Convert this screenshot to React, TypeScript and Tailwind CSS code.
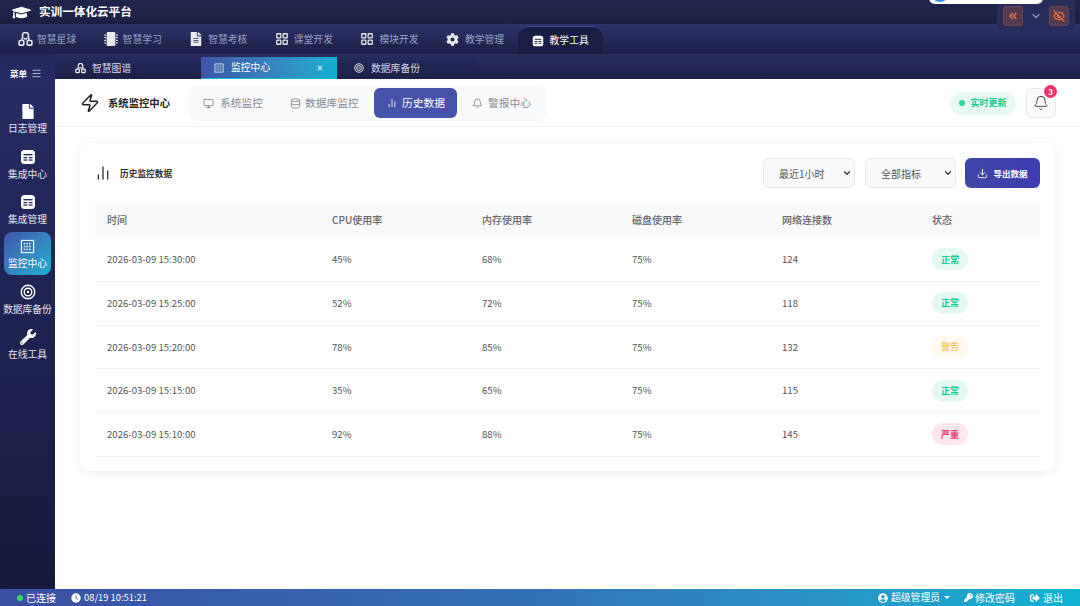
import React from "react";
import { Download, ChartNoAxesColumn, Zap, Monitor, Database, Bell, Menu, ChevronDown, ChevronsLeft, EyeOff, LayoutGrid, X } from "lucide-react";
import { FaCog, FaFile, FaFileAlt, FaGraduationCap, FaKey, FaMicrochip, FaSignOutAlt, FaUserCircle, FaWrench } from "react-icons/fa";

const font = { fontFamily: '"Noto Sans CJK SC", Inter, sans-serif' };

function ToolIcon({ className = "" }: { className?: string }) {
  return (
    <svg viewBox="0 0 16 16" className={className}>
      <rect x="1" y="1" width="14" height="14" rx="3.5" fill="currentColor" />
      <rect x="3.5" y="5" width="9" height="1.4" fill="#26305f" />
      <rect x="3.5" y="8" width="3.8" height="1.3" fill="#26305f" />
      <rect x="8.7" y="8" width="3.8" height="1.3" fill="#26305f" />
      <rect x="3.5" y="10.4" width="3.8" height="1.3" fill="#26305f" />
      <rect x="8.7" y="10.4" width="3.8" height="1.3" fill="#26305f" />
    </svg>
  );
}

function GridBox({ className = "" }: { className?: string }) {
  return (
    <svg viewBox="0 0 16 16" className={className} fill="none" stroke="currentColor">
      <rect x="1.5" y="1.5" width="13" height="13" strokeWidth="1.2" />
      <path d="M4 5h8M4 8h8M4 11h8" strokeWidth="1.4" strokeDasharray="1.6 1.2" />
    </svg>
  );
}

function NetIcon({ className = "" }: { className?: string }) {
  return (
    <svg viewBox="0 0 16 16" className={className} fill="none" stroke="currentColor" strokeWidth="1.7">
      <path d="M5.2 5.2A3.2 3.2 0 1 1 10.8 5.2L12 8.2" />
      <path d="M5.2 5.2L4 8.2" />
      <rect x="1.2" y="9" width="5" height="5" rx="1" />
      <rect x="9.8" y="9" width="5" height="5" rx="1" />
      <path d="M6 7.2h4" />
    </svg>
  );
}

function Bullseye({ className = "" }: { className?: string }) {
  return (
    <svg viewBox="0 0 16 16" className={className} fill="none" stroke="currentColor" strokeWidth="1.4">
      <circle cx="8" cy="8" r="6.8" />
      <circle cx="8" cy="8" r="3.8" />
      <circle cx="8" cy="8" r="1.2" fill="currentColor" stroke="none" />
    </svg>
  );
}

function SolidClock({ className = "" }: { className?: string }) {
  return (
    <svg viewBox="0 0 16 16" className={className}>
      <circle cx="8" cy="8" r="7.5" fill="currentColor" />
      <path d="M8 3.8V8.4L11 10.2" fill="none" stroke="#3569b3" strokeWidth="1.6" />
    </svg>
  );
}

const navs: [string, React.ReactNode][] = [
  ["智慧星球", <NetIcon key="a" className="w-[15px] h-[15px]" />],
  ["智慧学习", <FaMicrochip key="b" className="w-[14px] h-[14px]" />],
  ["智慧考核", <FaFileAlt key="c" className="w-[14px] h-[14px]" />],
  ["课堂开发", <LayoutGrid key="d" className="w-[14px] h-[14px]" strokeWidth={2.2} />],
  ["模块开发", <LayoutGrid key="e" className="w-[14px] h-[14px]" strokeWidth={2.2} />],
  ["教学管理", <FaCog key="f" className="w-[13px] h-[13px]" />],
];

const side: [string, React.ReactNode, boolean?][] = [
  ["日志管理", <FaFile key="1" className="w-[14px] h-[15px]" />],
  ["集成中心", <ToolIcon key="2" className="w-[16px] h-[16px]" />],
  ["集成管理", <ToolIcon key="3" className="w-[16px] h-[16px]" />],
  ["监控中心", <GridBox key="4" className="w-[15px] h-[15px]" />, true],
  ["数据库备份", <Bullseye key="5" className="w-[16px] h-[16px]" />],
  ["在线工具", <FaWrench key="6" className="w-[16px] h-[16px]" />],
];

const rows: [string, string, string, string, string, "ok" | "warn" | "bad"][] = [
  ["2026-03-09 15:30:00", "45%", "68%", "75%", "124", "ok"],
  ["2026-03-09 15:25:00", "52%", "72%", "75%", "118", "ok"],
  ["2026-03-09 15:20:00", "78%", "85%", "75%", "132", "warn"],
  ["2026-03-09 15:15:00", "35%", "65%", "75%", "115", "ok"],
  ["2026-03-09 15:10:00", "92%", "88%", "75%", "145", "bad"],
];

function Status({ s }: { s: "ok" | "warn" | "bad" }) {
  if (s === "ok")
    return <span className="inline-flex items-center justify-center w-[36px] h-[22px] rounded-full bg-[#e3f9f2] text-[#10cf95] text-[9px] font-bold">正常</span>;
  if (s === "warn")
    return <span className="inline-flex items-center justify-center w-[36px] h-[22px] rounded-full bg-[#fffaed] text-[#fbc765] text-[9px] font-bold">警告</span>;
  return <span className="inline-flex items-center justify-center w-[36px] h-[22px] rounded-full bg-[#fde6ec] text-[#ef3f72] text-[9px] font-bold">严重</span>;
}

const colClass = "grid grid-cols-[237px_150px_150px_150px_150px_1fr]";

export default function App() {
  return (
    <div style={font} className="relative w-[1080px] h-[606px] overflow-hidden flex flex-col bg-white text-[#333]">
      {/* overlay at top right */}
      <div className="absolute left-[929px] top-[-8px] w-[114px] h-[12px] rounded-full bg-white z-20 overflow-hidden">
        <div className="absolute left-[2px] top-[-8px] w-[18px] h-[18px] rounded-full bg-[#2b8fe8]" />
      </div>
      <div className="absolute left-[997px] top-0 w-[78px] h-[30px] bg-[#282d5c] rounded-b-[4px] z-10 flex items-center justify-between px-[6px] pt-[2px]">
        <span className="w-[20px] h-[20px] rounded-[3px] bg-[#553a50] border border-[#6a4453] flex items-center justify-center text-[#f0703a]">
          <ChevronsLeft className="w-[12px] h-[12px]" strokeWidth={3} />
        </span>
        <ChevronDown className="w-[12px] h-[12px] text-[#8d93bd]" strokeWidth={2.5} />
        <span className="w-[20px] h-[20px] rounded-[3px] bg-[#553a50] border border-[#6a4453] flex items-center justify-center text-[#f0703a]">
          <EyeOff className="w-[12px] h-[12px]" strokeWidth={2.5} />
        </span>
      </div>

      {/* title */}
      <header className="h-[24px] shrink-0 flex items-center pl-[12px] bg-gradient-to-b from-[#22264f] to-[#1b1f45] text-white">
        <FaGraduationCap className="w-[19px] h-[19px]" />
        <span className="ml-[8px] text-[11.6px] font-bold">实训一体化云平台</span>
      </header>

      {/* nav */}
      <nav className="h-[30px] shrink-0 flex items-stretch pl-[11px] bg-gradient-to-b from-[#2c3468] to-[#1c1f47] text-white">
        {navs.map(([t, icon]) => (
          <div key={t} className="w-[85.6px] pl-[7px] flex items-center">
            <span className="w-[19px] text-white/90">{icon}</span>
            <span className="text-[9.8px] text-[#98a0c4]">{t}</span>
          </div>
        ))}
        <div className="ml-[-7px] mt-[2px] w-[85px] pl-[14px] flex items-center gap-[6px] rounded-t-[10px] bg-[#1b1e44] border-t border-[#3b4690]">
          <ToolIcon className="w-[12px] h-[12px] text-white" />
          <span className="text-[9.8px] text-white">教学工具</span>
        </div>
      </nav>

      {/* tabs */}
      <div className="h-[25px] shrink-0 flex bg-gradient-to-b from-[#282e5f] to-[#1e2148] text-white">
        <div className="w-[55px] pt-[13px] pl-[10px] flex items-center gap-[4px] bg-gradient-to-b from-[#23275a] to-[#272c64]">
          <span className="text-[8.5px] font-bold">菜单</span>
          <Menu className="w-[11px] h-[11px] text-[#b9bed8]" />
        </div>
        <div className="mt-[3px] w-[146px] pl-[20px] flex items-center gap-[6px] bg-gradient-to-b from-[#252a5c] to-[#1d2047]">
          <NetIcon className="w-[11px] h-[11px]" />
          <span className="text-[9.8px] text-[#d5d8e8]">智慧图谱</span>
        </div>
        <div className="mt-[3px] w-[136px] pl-[13px] pr-[13px] flex items-center bg-gradient-to-r from-[#3d55a8] to-[#0fb0d0] border-b border-[#14b6d4]">
          <GridBox className="w-[10px] h-[10px]" />
          <span className="ml-[7px] text-[9.8px]">监控中心</span>
          <X className="ml-auto w-[8px] h-[8px] text-white/70" strokeWidth={3.5} />
        </div>
        <div className="mt-[3px] w-[140px] pl-[17px] flex items-center gap-[7px] bg-gradient-to-b from-[#252a5c] to-[#1d2047]">
          <Bullseye className="w-[10px] h-[10px]" />
          <span className="text-[9.8px] text-[#d5d8e8]">数据库备份</span>
        </div>
      </div>

      <div className="flex-1 min-h-0 flex">
        {/* sidebar */}
        <aside className="w-[55px] shrink-0 bg-gradient-to-b from-[#272c64] to-[#171a3e] flex flex-col items-center pt-[18px] text-white">
          {side.map(([t, icon, active]) => (
            <div
              key={t}
              className={
                active
                  ? "w-[47px] h-[43px] mt-[0px] mb-[2px] pt-[1px] rounded-[8px] bg-gradient-to-br from-[#3f55ac] to-[#10b1d0] flex flex-col items-center justify-center"
                  : "w-[47px] h-[45px] flex flex-col items-center justify-center"
              }
            >
              {icon}
              <span className={active ? "mt-[2px] text-[9.75px] leading-[14px] whitespace-nowrap" : "mt-[2px] text-[9.75px] leading-[14px] whitespace-nowrap text-[#e4e6f2]"}>{t}</span>
            </div>
          ))}
        </aside>

        {/* main */}
        <main className="flex-1 min-w-0 flex flex-col bg-white">
          <div className="h-[48px] shrink-0 flex items-center pt-[1px] pl-[25px] pr-[24px] bg-white border-b border-[#f2f3f6]">
            <Zap className="w-[20px] h-[20px] text-[#222]" strokeWidth={1.8} />
            <span className="ml-[8px] text-[10.33px] font-bold text-[#222]">系统监控中心</span>
            <div className="ml-[18px] h-[35px] w-[358px] rounded-[8px] bg-[#f9fafb] flex items-center pl-[15px] text-[10.75px] text-[#858a94]">
              <Monitor className="w-[11px] h-[11px]" />
              <span className="ml-[6px] w-[55px]">系统监控</span>
              <Database className="ml-[15px] w-[11px] h-[11px]" />
              <span className="ml-[4px] w-[69px] whitespace-nowrap">数据库监控</span>
              <div className="w-[83px] h-[30px] rounded-[6px] bg-[#4553ab] text-white flex items-center pl-[13px]">
                <ChartNoAxesColumn className="w-[10px] h-[10px]" />
                <span className="ml-[5px]">历史数据</span>
              </div>
              <Bell className="ml-[15px] w-[11px] h-[11px]" />
              <span className="ml-[5px]">警报中心</span>
            </div>
            <div className="ml-auto h-[23px] w-[66px] rounded-full bg-[#e6f9f3] flex items-center justify-center gap-[5px] text-[#12cf96]">
              <span className="w-[6px] h-[6px] rounded-full bg-[#2bd6a2]" />
              <span className="text-[9px] font-bold">实时更新</span>
            </div>
            <div className="relative ml-[10px] w-[30px] h-[30px] rounded-[6px] bg-[#fafafa] border border-[#e7e8ec] flex items-center justify-center">
              <Bell className="w-[16px] h-[16px] text-[#444]" strokeWidth={1.5} />
              <span className="absolute right-[-2px] top-[-4px] w-[13px] h-[13px] rounded-full bg-[#ee3468] text-white text-[8px] font-bold flex items-center justify-center">3</span>
            </div>
          </div>

          <div className="flex-1 min-h-0 px-[25px] pt-[16px] bg-white">
            <section className="h-[328px] rounded-[10px] bg-white shadow-[0_2px_12px_rgba(0,0,0,0.07)] px-[15px] pt-[15px]">
              <div className="h-[30px] flex items-center">
                <ChartNoAxesColumn className="w-[16px] h-[16px] text-[#333]" strokeWidth={2} />
                <span className="ml-[9px] mt-[1px] text-[8.7px] font-bold text-[#333]">历史监控数据</span>
                <div className="ml-auto w-[92px] h-[30px] rounded-[6px] bg-[#f8f9fa] border border-[#e8e9ec] flex items-center pl-[15px] pr-[2px] text-[10px] text-[#555]">
                  最近1小时
                  <ChevronDown className="ml-auto w-[10px] h-[10px] text-[#333]" strokeWidth={3} />
                </div>
                <div className="ml-[10px] w-[91px] h-[30px] rounded-[6px] bg-[#f8f9fa] border border-[#e8e9ec] flex items-center pl-[15px] pr-[2px] text-[10px] text-[#555]">
                  全部指标
                  <ChevronDown className="ml-auto w-[10px] h-[10px] text-[#333]" strokeWidth={3} />
                </div>
                <div className="ml-[9px] w-[75px] h-[30px] rounded-[6px] bg-gradient-to-r from-[#3f47a6] to-[#3e3cb0] text-white flex items-center justify-center gap-[5px]">
                  <Download className="w-[11px] h-[11px]" />
                  <span className="text-[8.5px] font-bold">导出数据</span>
                </div>
              </div>
              <div className={`${colClass} mt-[14px] h-[36px] pb-[1px] items-center bg-[#f8f9fa] text-[10px] text-[#666] font-medium`}>
                <span className="pl-[12px]">时间</span>
                <span>CPU使用率</span>
                <span>内存使用率</span>
                <span>磁盘使用率</span>
                <span>网络连接数</span>
                <span>状态</span>
              </div>
              {rows.map((r) => (
                <div key={r[0]} className={`${colClass} h-[43.75px] items-center border-b border-[#f1f2f4] text-[9.6px] text-[#555]`}>
                  <span className="pl-[12px]">{r[0]}</span>
                  <span>{r[1]}</span>
                  <span>{r[2]}</span>
                  <span>{r[3]}</span>
                  <span>{r[4]}</span>
                  <span><Status s={r[5]} /></span>
                </div>
              ))}
            </section>
          </div>
        </main>
      </div>

      {/* footer */}
      <footer className="h-[17px] shrink-0 flex items-center bg-gradient-to-r from-[#3a4fa3] via-[#3272b8] to-[#10b3d2] text-white text-[10px] pl-[17px] pr-[17px]">
        <span className="w-[6px] h-[6px] rounded-full bg-[#34d86a]" />
        <span className="ml-[3px]">已连接</span>
        <SolidClock className="ml-[15px] w-[10px] h-[10px]" />
        <span className="ml-[3px] text-[9.4px]">08/19 10:51:21</span>
        <FaUserCircle className="ml-auto w-[10px] h-[10px]" />
        <span className="ml-[3px] text-[9.8px]">超级管理员</span>
        <span className="ml-[4px] border-x-[3px] border-x-transparent border-t-[3px] border-t-white" />
        <FaKey className="ml-[14px] w-[9px] h-[9px]" />
        <span className="ml-[2px]">修改密码</span>
        <FaSignOutAlt className="ml-[15px] w-[10px] h-[10px]" />
        <span className="ml-[3px]">退出</span>
      </footer>
    </div>
  );
}
